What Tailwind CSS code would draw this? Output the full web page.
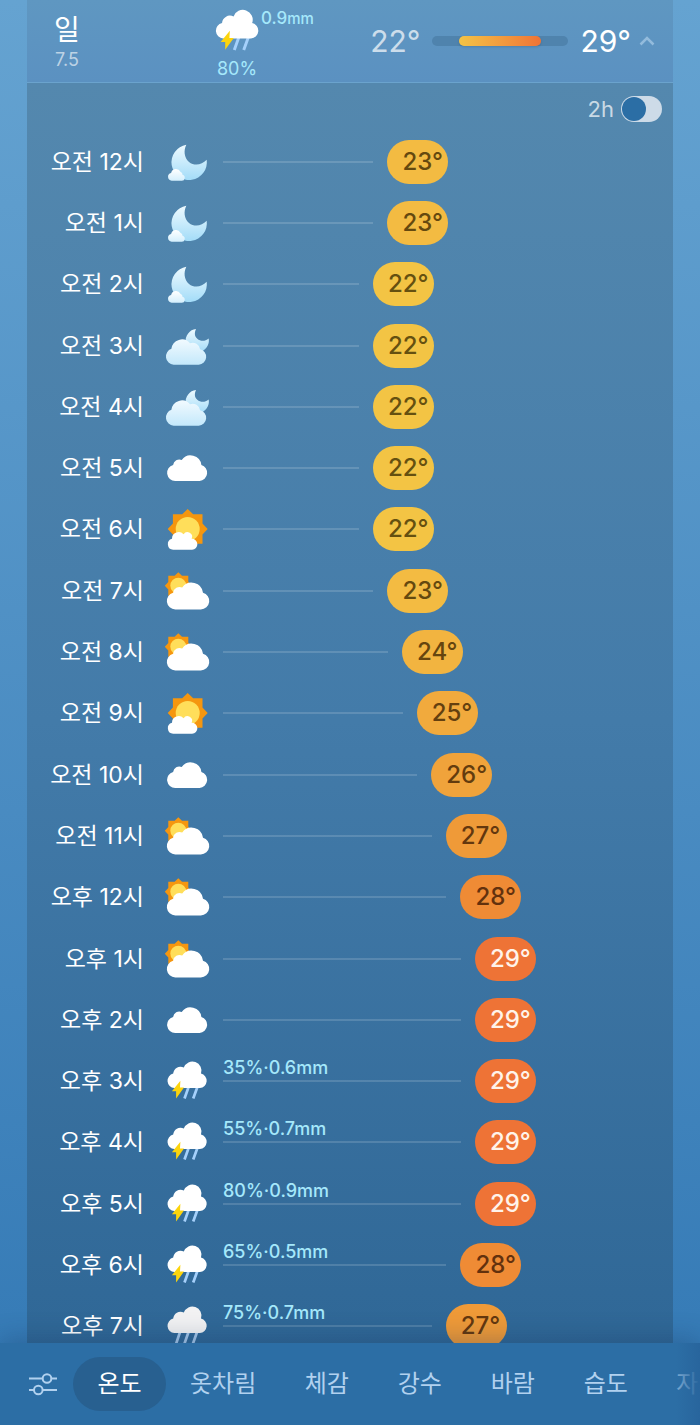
<!DOCTYPE html>
<html lang="ko">
<head>
    <meta charset="UTF-8">
    <meta name="viewport" content="width=device-width, initial-scale=1.0">
    <title>시간별 날씨</title>
    <script src="https://cdn.jsdelivr.net/npm/@tailwindcss/browser@4"></script>
</head>
<body class="font-['Inter','Noto_Sans_CJK_KR',sans-serif] text-white">
    <!-- Weather icons -->
    <svg class="absolute size-0" aria-hidden="true">
        <defs>
            <linearGradient id="night" x1="0" y1="0" x2="0" y2="1"><stop offset="0" stop-color="#eefaff"/><stop offset="1" stop-color="#a3dcf8"/></linearGradient>
            <linearGradient id="night-cloud" x1="0" y1="16" x2="0" y2="43" gradientUnits="userSpaceOnUse"><stop offset="0" stop-color="#f4fbff"/><stop offset="1" stop-color="#c3e8fb"/></linearGradient>
            <linearGradient id="night-puff" x1="0" y1="31" x2="0" y2="43" gradientUnits="userSpaceOnUse"><stop offset="0" stop-color="#ffffff"/><stop offset="1" stop-color="#d3effd"/></linearGradient>
        </defs>
        <symbol id="moon" viewBox="0 0 48 48">
            <path fill="url(#night)" d="M43.700 21.800A17.700 17.700 0 1 1 23.300 6.800C20.500 12.500 21 19.500 26 24C31 28 38.500 27.500 43.700 21.800Z"/>
            <path fill="url(#night-puff)" d="M8.700 42.700a3.900 3.900 0 0 1-.6-7.700a5 5 0 0 1 9.300-1.300a3 3 0 0 1 2.100 3.100a3 3 0 0 1-.9 5.900Z"/>
        </symbol>
        <symbol id="moon-cloud" viewBox="0 0 48 48">
            <path fill="url(#night)" d="M45.700 16.500A11.600 11.600 0 1 1 33 7C31.200 10.800 31.500 14.500 34.300 16.800C37.500 19.500 42 19.600 45.700 16.500Z"/>
            <path fill="url(#night-cloud)" d="M10.600 42.700a8.200 8.200 0 0 1-2.200-15.900a10.600 10.600 0 0 1 18.600-5.600a7.500 7.500 0 0 1 10.100 6.100a7.800 7.800 0 0 1-1.400 15.400Z"/>
        </symbol>
        <symbol id="cloud" viewBox="0 0 48 48">
            <path fill="#fff" d="M12.200 37a8.200 8.200 0 0 1-2.100-16.100a6.300 6.300 0 0 1 8.600-4.900a10.900 10.900 0 0 1 19.700 5a8.200 8.200 0 0 1-1.900 16Z"/>
        </symbol>
        <symbol id="sun" viewBox="0 0 48 48">
            <path fill="#f5960f" d="M24.700 4l5.500 5.200h9.300v9.200l5.200 5.600l-5.200 5.600v9.200H9.900v-9.200l-5.200-5.600l5.200-5.600V9.200h9.300Z"/>
            <circle cx="24.700" cy="24" r="12" fill="#ffde5a"/>
            <path fill="#fff" d="M10.200 44.800a5.600 5.600 0 0 1-1.200-11a6.700 6.700 0 0 1 11.600-4.500a4.600 4.600 0 0 1 8 4.500a5.500 5.500 0 0 1 .5 11Z"/>
        </symbol>
        <symbol id="sun-cloud" viewBox="0 0 48 48">
            <path fill="#f5960f" d="M15.300 5.200l3.700 3.500h6.300V15l3.500 3.700l-3.500 3.700v6.300H5.300v-6.300l-3.500-3.700l3.500-3.700V8.700h6.300Z"/>
            <circle cx="15.300" cy="18.700" r="8" fill="#ffde5a"/>
            <path fill="#fff" d="M12.300 42.400a8.500 8.500 0 0 1-2.200-16.700a6.600 6.600 0 0 1 9.100-5.200a11.500 11.500 0 0 1 20.800 5.200a8.500 8.500 0 0 1-2.200 16.700Z"/>
        </symbol>
        <symbol id="thunder" viewBox="0 0 48 48">
            <path stroke="#a5d0fb" stroke-width="2.700" d="M25.600 30L21.500 41.500M34.400 30L30.200 41.500"/>
            <path fill="#fff" d="M11.300 31a7.300 7.300 0 0 1-1.100-14.400a7.300 7.300 0 0 1 10.600-6a9.100 9.100 0 0 1 17.200 6a7.300 7.300 0 0 1-1.100 14.400Z"/>
            <path fill="#fcd40c" d="M17.400 23.700L8.900 34.200h4.200v7.200L21 30.400h-4Z"/>
        </symbol>
        <symbol id="rain" viewBox="0 0 48 48">
            <path stroke="#a5c8ec" stroke-width="2.700" d="M17.200 29.500L13.200 41.500M25.700 29.500L21.500 41.500M34.200 29.500L30 41.500"/>
            <path fill="#f2f2f3" d="M11.300 31a7.300 7.300 0 0 1-1.100-14.400a7.300 7.300 0 0 1 10.600-6a9.100 9.100 0 0 1 17.200 6a7.300 7.300 0 0 1-1.100 14.400Z"/>
        </symbol>
    </svg>

    <div class="flex h-screen flex-col overflow-hidden bg-linear-to-b from-[#65a3d1] to-[#3379b5]">
        <main class="mx-[27px] min-h-0 flex-1 overflow-hidden">
            <!-- Day summary -->
            <button class="flex h-[83px] w-full border-b border-[#6ba3cd] bg-linear-to-b from-[#5f97c1] to-[#5b91c1] text-left">
                <span class="flex w-20 shrink-0 flex-col items-center pt-3">
                    <span class="text-[28px] leading-9">일</span>
                    <span class="text-lg leading-6 text-white/60">7.5</span>
                </span>
                <span class="ml-[104px] flex w-[52px] shrink-0 flex-col items-center pt-[5px]">
                    <span class="relative">
                        <svg class="size-[52px]"><use href="#thunder"/></svg>
                        <span class="absolute top-[3px] left-full -ml-[2px] text-[17px] leading-5 font-medium whitespace-nowrap text-[#a5e8fb]">0.9<span class="text-[15px]">mm</span></span>
                    </span>
                    <span class="text-lg leading-6 text-[#a5e8fb]">80%</span>
                </span>
                <span class="flex flex-1 items-center justify-end gap-3 pr-[18px] text-[30px] leading-9">
                    <span class="text-white/70">22°</span>
                    <span class="h-[10px] w-[136px] rounded-full bg-[#4f83ad] px-[27px]">
                        <span class="block h-full rounded-full bg-linear-to-r from-[#f3c345] to-[#ee7336] shadow-sm"></span>
                    </span>
                    <span class="flex items-center gap-2">29°
                        <svg class="h-[10px] w-4" viewBox="0 0 16 10" fill="none" stroke="#93bbdc" stroke-width="2.5"><path d="M1.500 8.500L8 2l6.500 6.500"/></svg>
                    </span>
                </span>
            </button>

            <section class="bg-linear-to-b from-[#5488ae] via-[#437ba9] to-[#2f6796]">
                <div class="flex h-12 items-center justify-end pt-1 pr-[11px]">
                    <label for="interval" class="mr-[7px] text-[22px] leading-7 text-white/70">2h</label>
                    <input id="interval" type="checkbox" role="switch" class="h-[26px] w-[41px] appearance-none rounded-full bg-[#cddbe8] p-px before:block before:size-6 before:rounded-full before:bg-[#2b6ea5] checked:before:ml-auto">
                </div>
                <ul id="hours" class="grid h-[1226px] auto-rows-fr"></ul>
            </section>
        </main>

        <!-- Metric tabs -->
        <nav class="relative flex h-[82px] shrink-0 items-center overflow-x-auto bg-[#2c6ea5] pl-7 text-2xl text-[#b1d1ef] shadow-[0_-4px_24px_rgba(20,50,90,0.3)] [scrollbar-width:none]">
            <button class="mr-[15px] shrink-0" aria-label="설정">
                <svg class="h-6 w-[30px]" viewBox="0 0 30 24" fill="none" stroke="currentColor" stroke-width="2"><path d="M1 6.500h13.500M23.500 6.500H29M1 18h5M15 18h14"/><circle cx="19" cy="6.500" r="4.300"/><circle cx="10.300" cy="18" r="4.300"/></svg>
            </button>
            <button class="h-[54px] min-w-[93px] shrink-0 rounded-full bg-[#286090] px-6 text-white">온도</button>
            <button class="h-[54px] min-w-[93px] shrink-0 px-6">옷차림</button>
            <button class="h-[54px] min-w-[93px] shrink-0 px-6">체감</button>
            <button class="h-[54px] min-w-[93px] shrink-0 px-6">강수</button>
            <button class="h-[54px] min-w-[93px] shrink-0 px-6">바람</button>
            <button class="h-[54px] min-w-[93px] shrink-0 px-6">습도</button>
            <button class="h-[54px] min-w-[93px] shrink-0 px-6">자외선</button>
            <span class="pointer-events-none absolute inset-y-0 right-0 w-12 bg-linear-to-r from-[#2c6ea5]/0 via-[#2c6ea5]/40 to-[#28659d]"></span>
        </nav>
    </div>

    <script>
        const hours = [
            ['오전 12시', 'moon', 23],
            ['오전 1시', 'moon', 23],
            ['오전 2시', 'moon', 22],
            ['오전 3시', 'moon-cloud', 22],
            ['오전 4시', 'moon-cloud', 22],
            ['오전 5시', 'cloud', 22],
            ['오전 6시', 'sun', 22],
            ['오전 7시', 'sun-cloud', 23],
            ['오전 8시', 'sun-cloud', 24],
            ['오전 9시', 'sun', 25],
            ['오전 10시', 'cloud', 26],
            ['오전 11시', 'sun-cloud', 27],
            ['오후 12시', 'sun-cloud', 28],
            ['오후 1시', 'sun-cloud', 29],
            ['오후 2시', 'cloud', 29],
            ['오후 3시', 'thunder', 29, '35%·0.6mm'],
            ['오후 4시', 'thunder', 29, '55%·0.7mm'],
            ['오후 5시', 'thunder', 29, '80%·0.9mm'],
            ['오후 6시', 'thunder', 28, '65%·0.5mm'],
            ['오후 7시', 'rain', 27, '75%·0.7mm'],
        ];

        const pillColors = {
            22: 'bg-[#f3c444] text-[#655010]',
            23: 'bg-[#f3bb42] text-[#65490f]',
            24: 'bg-[#f2b440] text-[#65450f]',
            25: 'bg-[#f1aa3d] text-[#64400f]',
            26: 'bg-[#f0a33b] text-[#633c0e]',
            27: 'bg-[#ef9a38] text-[#63370e]',
            28: 'bg-[#ef8b35] text-[#63310d]',
            29: 'bg-[#ee7336] text-[#fff3ea]',
        };

        document.getElementById('hours').innerHTML = hours.map(([time, icon, temp, rain = '']) => `
            <li class="flex items-center">
                <span class="w-[117px] shrink-0 text-right text-[23px] leading-8">${time}</span>
                <svg class="mx-[19px] size-12 shrink-0"><use href="#${icon}"/></svg>
                <div class="-ml-[7px] flex flex-1 items-center">
                    <div class="relative h-[2px] bg-white/15" style="width: ${30.2 + (temp - 22) * 3.24}%">
                        <span class="absolute bottom-1 left-0 text-lg leading-5 font-medium whitespace-nowrap text-[#a5e8fb]">${rain}</span>
                    </div>
                    <span class="ml-[14px] h-11 w-[61px] rounded-full pl-[15px] text-2xl leading-11 font-medium ${pillColors[temp]}">${temp}°</span>
                </div>
            </li>`).join('');
    </script>
</body>
</html>
